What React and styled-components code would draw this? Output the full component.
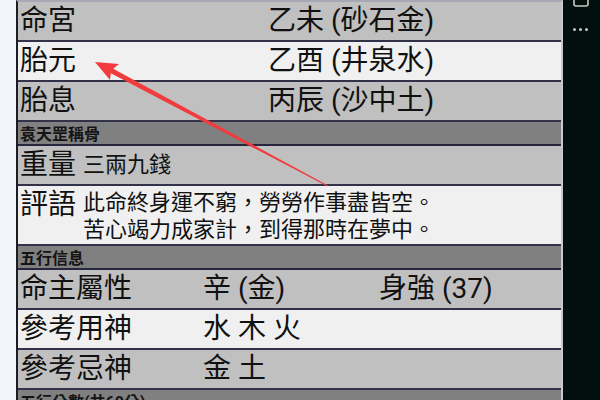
import styled, { createGlobalStyle } from 'styled-components'

const GlobalStyle = createGlobalStyle`
    html, body {
        margin: 0;
        padding: 0;
        width: 600px;
        height: 400px;
        overflow: hidden;
        background: #f2f5fa;
    }
    body {
        font-family: Roboto, 'Noto Sans CJK TC', sans-serif;
        color: #111;
    }
`

const Screen = styled.div`
    position: relative;
    display: flex;
    width: 600px;
    height: 400px;
    overflow: hidden;
`

const Gutter = styled.div`
    width: 16px;
    flex-shrink: 0;
    background: #f2f5fa;
`

const Table = styled.div`
    width: 543px;
    flex-shrink: 0;
    border-left: 2px solid #1c1c24;
    border-right: 2px solid #c8c8d0;
    border-top: 2px solid #a8a8b4;
    display: flex;
    flex-direction: column;
`

const Row = styled.div`
    display: grid;
    grid-template-columns: ${(p) => p.$cols || 'auto 1fr'};
    align-items: ${(p) => (p.$top ? 'start' : 'center')};
    column-gap: ${(p) => p.$gap || 0}px;
    height: ${(p) => p.$h || 38}px;
    padding-left: 2px;
    background: ${(p) => (p.$light ? '#f0f0f0' : '#c0c0c0')};
    border-bottom: 2px solid #32324a;
    flex-shrink: 0;
`

const Big = styled.span`
    font-size: 28px;
    line-height: 38px;
    white-space: nowrap;
`

const Medium = styled.span`
    font-size: 22px;
    line-height: ${(p) => p.$lh || 38}px;
    white-space: nowrap;
    padding-top: ${(p) => p.$pt || 0}px;
`

const SectionHead = styled.div`
    height: 22px;
    padding-left: 2px;
    display: flex;
    align-items: center;
    background: #808080;
    border-bottom: 2px solid #26263e;
    font-size: 16px;
    font-weight: 700;
    color: #141414;
    flex-shrink: 0;
`

const SidePanel = styled.div`
    flex: 1;
    background: #02100d;
    display: flex;
    flex-direction: column;
    align-items: center;
    padding-right: 2px;
`

const Dots = styled.div`
    display: flex;
    gap: 3px;
    margin-top: 21px;
    span {
        width: 3px;
        height: 3px;
        border-radius: 50%;
        background: #c8c8c8;
    }
`

const Arrow = styled.svg`
    position: absolute;
    left: 0;
    top: 0;
    pointer-events: none;
`

export default function App() {
    return (
        <Screen>
            <GlobalStyle />
            <Gutter />
            <Table>
                <Row $cols="248px 1fr">
                    <Big>命宮</Big>
                    <Big>乙未 (砂石金)</Big>
                </Row>
                <Row $cols="248px 1fr" $light>
                    <Big>胎元</Big>
                    <Big>乙酉 (井泉水)</Big>
                </Row>
                <Row $cols="248px 1fr">
                    <Big>胎息</Big>
                    <Big>丙辰 (沙中土)</Big>
                </Row>
                <SectionHead>袁天罡稱骨</SectionHead>
                <Row $gap={7}>
                    <Big>重量</Big>
                    <Medium>三兩九錢</Medium>
                </Row>
                <Row $gap={7} $light $h={58} $top>
                    <Big>評語</Big>
                    <Medium $lh={27} $pt={3}>
                        此命終身運不窮，勞勞作事盡皆空。
                        <br />
                        苦心竭力成家計，到得那時在夢中。
                    </Medium>
                </Row>
                <SectionHead>五行信息</SectionHead>
                <Row $cols="183px 176px 1fr">
                    <Big>命主屬性</Big>
                    <Big>辛 (金)</Big>
                    <Big>身強 (37)</Big>
                </Row>
                <Row $cols="183px 176px 1fr" $light>
                    <Big>參考用神</Big>
                    <Big>水 木 火</Big>
                    <span />
                </Row>
                <Row $cols="183px 176px 1fr">
                    <Big>參考忌神</Big>
                    <Big>金 土</Big>
                    <span />
                </Row>
                <SectionHead>五行分數(共60分)</SectionHead>
            </Table>
            <SidePanel>
                <svg width="18" height="7" viewBox="0 0 18 7">
                    <path
                        d="M2 0 V4 Q2 6 4 6 H14 Q16 6 16 4 V0"
                        fill="none"
                        stroke="#c8c8c8"
                        strokeWidth="1.6"
                    />
                </svg>
                <Dots>
                    <span />
                    <span />
                    <span />
                </Dots>
            </SidePanel>
            <Arrow width="600" height="400" viewBox="0 0 600 400">
                <polygon
                    points="95,62 119,64 113.2,68.8 328,185.4 327.6,186.6 110.8,73.2 110,80"
                    fill="#f03c3c"
                />
            </Arrow>
        </Screen>
    )
}
